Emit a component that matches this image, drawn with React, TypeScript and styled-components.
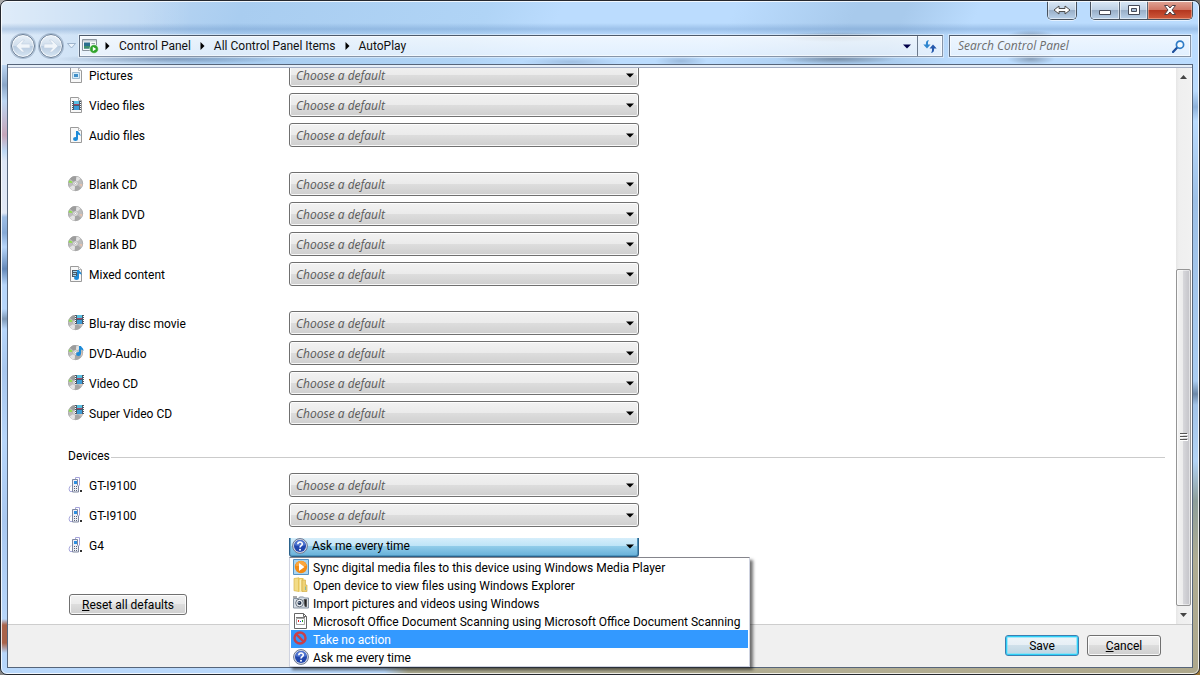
import React from "react";
import styled, { createGlobalStyle, css } from "styled-components";

const Global = createGlobalStyle`
  *, *::before, *::after { box-sizing: border-box; }
  body {
    margin: 0;
    background: linear-gradient(135deg, #a9a9a9 0%, #6f6f6f 60%, #9a7434 100%);
    font: 12px/16px Roboto, "Open Sans", sans-serif;
    color: #000;
  }
  button, input, select { font: inherit; color: inherit; margin: 0; }
  svg { display: block; flex: none; }
`;

/* ---------- window frame ---------- */

const Frame = styled.div`
  position: relative;
  display: flex;
  flex-direction: column;
  height: 100vh;
  padding: 0 6px 6px;
  overflow: hidden;
  border: 1px solid #25282f;
  border-radius: 7px;
  background:
    radial-gradient(ellipse 60px 5px at 835px 36px, rgba(90, 105, 125, 0.55), transparent),
    radial-gradient(ellipse 60px 5px at 835px 58px, rgba(90, 105, 125, 0.6), transparent),
    radial-gradient(ellipse 24px 6px at 1030px 35px, rgba(90, 105, 125, 0.5), transparent),
    radial-gradient(ellipse 24px 6px at 1030px 58px, rgba(90, 105, 125, 0.5), transparent),
    radial-gradient(ellipse 120px 5px at 170px 58px, rgba(80, 105, 140, 0.5), transparent),
    radial-gradient(ellipse 50px 5px at 570px 61px, rgba(80, 105, 140, 0.25), transparent),
    radial-gradient(ellipse 26px 6px at 680px 60px, rgba(80, 105, 140, 0.3), transparent),
    linear-gradient(transparent 22px, rgba(90, 135, 190, 0.32) 28px, transparent 34px),
    linear-gradient(to right, rgba(255, 255, 255, 0.55), transparent 190px) top / 100% 64px no-repeat,
    linear-gradient(115deg, #b9d5f2 0, #b9d5f2 12%, #a9cdf0 20%, #b0d4f6 40%, #bbdcfe 46%, #bbdcfe 60%, #a8caec 70%, #a8caec 74%, #bbdcfe 80%, #bbdcfe 100%) top / 100% 64px no-repeat,
    linear-gradient(to right, #b9d8fb 0, #b9d8fb 32%, #aba98f 34%, #b3ae93 70%, #aea88c 100%) bottom / 100% 7px no-repeat,
    linear-gradient(#bdd7f3 64px, #8aa6c8 84px, #bdd7f3 100px, #c6a6ba 134px, #bdd7f3 150px, #dde6f5 160px, #e1e8f5 212px, #9dbde4 216px, #86a9d6 232px, #b7d6fa 246px, #6488b8 268px, #b7d6fa 284px, #b7d6fa 308px, #7e98b6 318px, #b7d6fa 328px, #a8c7ee 370px, #b7d6fa 440px, #a9c8f0 520px, #b7d6fa 618px, #a9634a 624px, #a9634a 642px, #b7d6fa 652px) left / 50% 100% no-repeat,
    linear-gradient(#bbdcfe 90px, #8db1da 106px, #bbdcfe 120px, #9dc0e6 200px, #aacdf2 380px, #6c88a8 393px, #a3c4e8 404px, #b3d4f6 460px, #8e9f9a 500px, #b0ad93 560px, #aea88c 100%) right / 50% 100% no-repeat;
  &::after {
    content: "";
    position: absolute;
    inset: 0;
    border: 1px solid rgba(255, 255, 255, 0.8);
    border-radius: 6px;
    pointer-events: none;
  }
`;

const CaptionBar = styled.header`
  display: flex;
  flex: none;
  justify-content: flex-end;
  height: 19px;
`;

const CaptionGroup = styled.div`
  display: flex;
  overflow: hidden;
  margin-left: 13px;
  border: 1px solid #47525f;
  border-top: 0;
  border-radius: 0 0 5px 5px;
  box-shadow: 0 1px 0 rgba(255, 255, 255, 0.6);
`;

const CaptionButton = styled.button<{ $wide?: boolean; $danger?: boolean }>`
  display: grid;
  place-items: center;
  width: ${(p) => (p.$wide ? 45 : 28)}px;
  padding: 0;
  border: 0;
  background: linear-gradient(#dbe9f7, #bccfe3 50%, #98aec7 51%, #b9d1ea);
  box-shadow: inset 0 0 0 1px rgba(255, 255, 255, 0.5);
  & + & { border-left: 1px solid #5b6878; }
  ${(p) =>
    p.$danger &&
    css`
      background: linear-gradient(#e0a597, #cf7563 50%, #b3361f 51%, #cf5a3c);
      box-shadow: inset 0 0 0 1px rgba(255, 220, 200, 0.45);
    `}
`;

const Toolbar = styled.nav`
  display: flex;
  flex: none;
  align-items: center;
  height: 22px;
  margin: 15px 2px 7px 4px;
`;

const History = styled.div`
  display: flex;
  align-items: center;
  flex: none;
  width: 68px;
`;

const RoundButton = styled.button`
  display: grid;
  place-items: center;
  width: 24px;
  height: 24px;
  margin-right: 4px;
  padding: 0;
  border: 1px solid #6c7f96;
  border-radius: 50%;
  background: linear-gradient(#e9f1f9, #d0deec 48%, #b9cce0 52%, #d6e5f3);
  box-shadow: inset 0 0 0 1px rgba(255, 255, 255, 0.7), 0 0 0 1px rgba(110, 135, 165, 0.45);
`;

const RecentButton = styled.button`
  padding: 0;
  border: 0;
  background: none;
`;

const glassField = css`
  display: flex;
  align-items: center;
  height: 22px;
  border: 1px solid #8795a8;
  border-top-color: #4d5a6b;
  border-left-color: #5f6d80;
  background: linear-gradient(rgba(255, 255, 255, 0.75), rgba(244, 249, 255, 0.68));
  box-shadow: 0 0 0 1px rgba(255, 255, 255, 0.4), inset 0 0 0 1px rgba(255, 255, 255, 0.6);
`;

const AddressBar = styled.div`
  ${glassField}
  flex: 1;
  min-width: 0;
  padding-left: 2px;
`;

const Crumbs = styled.ol`
  display: flex;
  flex: 1;
  align-items: center;
  margin: 0;
  padding: 0 0 0 6px;
  list-style: none;
`;

const Crumb = styled.li`
  display: flex;
  align-items: center;
  gap: 9px;
  margin-right: 9px;
  a { color: #111; text-decoration: none; }
`;

const FieldButton = styled.button<{ $divided?: boolean }>`
  display: grid;
  place-items: center;
  align-self: stretch;
  width: ${(p) => (p.$divided ? 25 : 20)}px;
  padding: 0;
  border: 0;
  border-left: ${(p) => (p.$divided ? "1px solid #6c7a8c" : "0")};
  background: none;
`;

const SearchBox = styled.form`
  ${glassField}
  flex: 0 0 242px;
  margin-left: 6px;
  padding: 0 2px 0 8px;
  input {
    flex: 1;
    min-width: 0;
    padding: 0;
    border: 0;
    outline: 0;
    background: none;
    font-family: "Open Sans", sans-serif;
    font-style: italic;
  }
  input::placeholder { color: #6d6d6d; opacity: 1; }
`;

/* ---------- page ---------- */

const Client = styled.main`
  display: flex;
  flex: 1;
  flex-direction: column;
  min-height: 0;
  border: 1px solid #56657a;
  background: #fff;
`;

const TopEdge = styled.div`
  flex: none;
  height: 3px;
  border-bottom: 1px solid #a3adc2;
  background: #e6eff9;
`;

/* The page rests at its last scroll position, so older rows run off the top;
   the open list may still hang over the bar below. */
const Viewport = styled.div`
  position: relative;
  z-index: 1;
  display: flex;
  flex: 1;
  min-height: 0;
  padding-right: 1px;
  clip-path: inset(0 0 -60px 0);
`;

const Page = styled.div`
  display: flex;
  flex: 1;
  flex-direction: column;
  justify-content: flex-end;
  min-width: 0;
  padding: 0 11px 9px 60px;
`;

const Group = styled.section`
  display: flex;
  flex: none;
  flex-direction: column;
  gap: 6px;
  & + & { margin-top: 25px; }
`;

const Row = styled.div`
  display: flex;
  align-items: center;
  height: 24px;
`;

const ItemText = styled.span`
  padding-top: 2px;
  line-height: 16px;
  white-space: nowrap;
`;

const RowLabel = styled.label`
  display: flex;
  flex: 0 0 221px;
  align-items: center;
  gap: 5px;
`;

const SelectShell = styled.div`
  display: flex;
  align-items: center;
  flex: 0 1 350px;
  height: 24px;
  border: 1px solid #707070;
  border-radius: 3px;
  background: linear-gradient(#f2f2f2, #ebebeb 48%, #dddddd 50%, #cfcfcf);
  box-shadow: inset 0 0 0 1px rgba(255, 255, 255, 0.85);
  select {
    flex: 1;
    height: 22px;
    padding: 2px 6px 0;
    border: 0;
    outline: 0;
    appearance: none;
    background: none;
    font-family: "Open Sans", sans-serif;
    font-style: italic;
    color: #5a5a5a;
  }
  svg { margin: 0 4px 0 -12px; pointer-events: none; }
`;

const GroupTitle = styled.h2`
  display: flex;
  flex: none;
  align-items: center;
  gap: 1px;
  height: 20px;
  margin: 20px 0 8px;
  font-size: 12px;
  font-weight: 400;
  &::after {
    content: "";
    flex: 1;
    height: 1px;
    margin-top: 4px;
    background: #cbcbcb;
  }
`;

const OpenCombo = styled.div`
  position: relative;
  display: flex;
  flex: 0 1 350px;
  align-self: flex-end;
`;

const ComboButton = styled.button`
  display: flex;
  flex: 1;
  align-items: center;
  gap: 4px;
  height: 19px;
  padding: 0 4px 2px 2px;
  border: 1px solid #2c628b;
  border-top: 0;
  border-radius: 0 0 3px 3px;
  background: linear-gradient(#d6eefb, #bfe4f7 42%, #93cdea 44%, #66b0d9);
  box-shadow: inset 1px 0 0 #6aa5c9, inset -1px 0 0 #4d90b8, inset 0 -1px 0 #4f97c0;
  text-align: left;
  span { flex: 1; }
`;

const Menu = styled.ul`
  position: absolute;
  top: 100%;
  left: 0;
  width: max-content;
  min-width: 461px;
  margin: 0;
  padding: 0 1px;
  border: 1px solid #cfd3e0;
  border-top-color: #85858c;
  background: #fff;
  box-shadow: 3px 3px 3px rgba(0, 0, 0, 0.55);
  list-style: none;
`;

const MenuItem = styled.li<{ $active?: boolean }>`
  display: flex;
  align-items: center;
  gap: 4px;
  height: 18px;
  padding: 0 6px 0 2px;
  background: ${(p) => (p.$active ? "#3399ff" : "transparent")};
  color: ${(p) => (p.$active ? "#fff" : "#000")};
`;

const Actions = styled.div`
  display: flex;
  flex: none;
  padding: 37px 1px 0;
`;

const PushButton = styled.button<{ $primary?: boolean }>`
  min-width: 74px;
  height: 21px;
  padding: 0 12px;
  border: 1px solid #707070;
  border-radius: 3px;
  background: linear-gradient(#f2f2f2, #ebebeb 48%, #dddddd 50%, #cfcfcf);
  box-shadow: inset 0 0 0 1px rgba(255, 255, 255, 0.85);
  line-height: 18px;
  white-space: nowrap;
  ${(p) =>
    p.$primary &&
    css`
      border-color: #3c7fb1;
      background: linear-gradient(#eef5f9, #e6eff5 48%, #cfe0ea 50%, #bcd5e3);
      box-shadow: inset 0 0 0 1px #2fd0f8, inset 0 0 0 2px rgba(120, 225, 250, 0.6);
    `}
`;

const Footer = styled.footer`
  display: flex;
  flex: none;
  justify-content: flex-end;
  gap: 8px;
  padding: 10px 31px 11px;
  border-top: 1px solid #cdcdcd;
  background: #f0f0f0;
`;

/* ---------- scroll bar ---------- */

const ScrollBar = styled.div`
  display: flex;
  flex: 0 0 15px;
  flex-direction: column;
  background: linear-gradient(to right, #e6e6e6, #efefef 3px, #f1f1f1);
`;

const ScrollArrow = styled.button`
  display: grid;
  place-items: center;
  height: 18px;
  padding: 0;
  border: 0;
  background: none;
`;

const ScrollSpace = styled.div`
  flex: 23;
`;

const ScrollThumb = styled.div`
  display: grid;
  flex: 42;
  place-items: center;
  border: 1px solid #959595;
  border-radius: 2px;
  background: linear-gradient(to right, #f4f4f4, #ececec 45%, #d6d6da 50%, #c3c3c8);
  box-shadow: inset 0 0 0 1px rgba(255, 255, 255, 0.5);
`;

/* ---------- drawings ---------- */

const Down = ({ color = "#000" }: { color?: string }) => (
  <svg width="8" height="5" viewBox="0 0 8 5" aria-hidden="true">
    <path d="M0 .5h8L4 4.5z" fill={color} />
  </svg>
);

const Right = () => (
  <svg width="5" height="8" viewBox="0 0 5 8" aria-hidden="true">
    <path d="M.5 0v8L4.5 4z" fill="#000" />
  </svg>
);

const Sheet = () => (
  <>
    <path d="M2.500.5h8l3 3v12h-11z" fill="#f8f8f8" stroke="#9a9a9a" />
    <path d="M10.500.5v3h3" fill="#fff" stroke="#b5b5b5" />
  </>
);

const Film = ({ x, y }: { x: number; y: number }) => (
  <g transform={`translate(${x} ${y})`}>
    <path d="M0 0h9v9H0z" fill="#4b5866" />
    <path d="M2 0h5v4H2z" fill="#58bfe2" />
    <path d="M2 5h5v4H2z" fill="#3a9bd6" />
    <path d="M2 3h5v1H2z" fill="#a6466a" />
    <path d="M0 1.500h1M0 3.500h1M0 5.500h1M0 7.500h1M8 1.500h1M8 3.500h1M8 5.500h1M8 7.500h1" stroke="#fff" />
  </g>
);

const Note = ({ x, y }: { x: number; y: number }) => (
  <g transform={`translate(${x} ${y})`} fill="#1b8ad8">
    <ellipse cx="2.500" cy="8" rx="2.500" ry="2" />
    <path d="M3 0h2c.3 1.800 2.800 2 2.500 5.200C7 4.200 6 3.700 5 3.500V8H3z" />
  </g>
);

const Disc = () => (
  <>
    <circle cx="7.500" cy="7.500" r="7.200" fill="#bdbdbd" stroke="#9a9a9a" strokeWidth=".7" />
    <path d="M7.500 7.500L2 2.700A7.200 7.200 0 0 1 8.500.4z" fill="#9c9c9c" />
    <path d="M7.500 7.500L8.500.4a7 7 0 0 1 4 2.100z" fill="#e2e2e2" />
    <path d="M7.500 7.500L13 12a7 7 0 0 1-6.500 2.600z" fill="#a6a6a6" />
    <path d="M7.500 7.500L6.500 14.600A7 7 0 0 1 1.500 11.500z" fill="#e4e4e4" />
    <path d="M4 6.900L.7 6.500a7 7 0 0 1 .8-2.300l3 1.500z" fill="#8ee04a" />
    <path d="M11 8l3.400.2a7 7 0 0 1-.7 2.500z" fill="#e7c3b0" />
    <circle cx="7.500" cy="7.500" r="2.600" fill="#e8e8e8" stroke="#a5a5a5" strokeWidth=".6" />
    <circle cx="7.500" cy="7.500" r="1" fill="#fff" stroke="#999" strokeWidth=".5" />
  </>
);

type Kind = "picture" | "video" | "audio" | "disc" | "mixed" | "discVideo" | "discAudio" | "phone";

const drawings: Record<Kind, React.ReactNode> = {
  picture: (
    <>
      <Sheet />
      <path d="M4.500 5.500h7v6h-7z" fill="#d4ecfa" stroke="#9bb9cf" />
      <path d="M6 7h4v3H6z" fill="#3f8fc9" />
    </>
  ),
  video: (<><Sheet /><Film x={4} y={4} /></>),
  audio: (<><Sheet /><Note x={5} y={4} /></>),
  mixed: (
    <>
      <Sheet />
      <path d="M4 4h6v7H4z" fill="#4b5866" />
      <path d="M5 5.500h4M5 7.500h3M5 9.500h3" stroke="#9fd3ec" />
      <Note x={6} y={4} />
    </>
  ),
  disc: <Disc />,
  discVideo: (<><Disc /><Film x={7} y={0} /></>),
  discAudio: (<><Disc /><Note x={8} y={1} /></>),
  phone: (
    <>
      <path d="M7.500 2V.5h4v8M3 8.500c-2 1.500-2.500 4-1 6h3" fill="none" stroke="#a6a6dc" />
      <path d="M4.500 2.500h5v5.500l1 1v6h-6z" fill="#eceff6" stroke="#7f879f" />
      <path d="M6 4h3v3H6z" fill="#2d8fe0" />
      <path d="M6 9.500h3M6 11.500h3M6 13.500h3" stroke="#5d6377" strokeDasharray="1 1" />
      <path d="M12 13h2v2h-2z" fill="#333" />
    </>
  ),
};

const ItemIcon = ({ kind }: { kind: Kind }) => (
  <svg width="16" height="16" viewBox="0 0 16 16" aria-hidden="true">{drawings[kind]}</svg>
);

const AskIcon = () => (
  <svg width="16" height="16" viewBox="0 0 16 16" aria-hidden="true">
    <circle cx="8" cy="8" r="7.400" fill="#d5dbe8" stroke="#6b7690" />
    <circle cx="8" cy="8" r="6" fill="#2146ad" />
    <path d="M2.500 7a5.500 5 0 0 1 11 0c-3 1.200-8 1.200-11 0z" fill="#4f74d0" />
    <path d="M5.800 6.300C5.800 3.300 10.400 3.400 10.300 6 10.200 7.700 8 7.700 8 9.600" fill="none" stroke="#fff" strokeWidth="1.600" />
    <circle cx="8" cy="11.700" r="1" fill="#fff" />
  </svg>
);

const PlayerIcon = () => (
  <svg width="16" height="16" viewBox="0 0 16 16" aria-hidden="true">
    <path d="M.5.5h15v15H.5z" fill="#a9d5f2" stroke="#5592c4" />
    <circle cx="8" cy="8" r="6.200" fill="#f38a14" />
    <path d="M2.500 7a5.500 5 0 0 1 11 0z" fill="#fba63e" />
    <path d="M6 4v8l5.500-4z" fill="#fff" />
  </svg>
);

const FolderIcon = () => (
  <svg width="16" height="16" viewBox="0 0 16 16" aria-hidden="true">
    <path d="M1 1.500L6 .8v13.700l-5-.8z" fill="#f3dc86" stroke="#d9b64e" strokeWidth=".7" />
    <path d="M5 1h5.500v13.500H5z" fill="#e7c65c" />
    <path d="M6.500 2.500L8.500 2v13l-2-.6z" fill="#fbf0b8" />
    <path d="M9 3h3.500v5H14v6.500H9z" fill="#efd375" stroke="#d4b04a" strokeWidth=".7" />
    <path d="M12 9.500h1V13h-1z" fill="#8bb7a0" />
  </svg>
);

const CameraIcon = () => (
  <svg width="16" height="16" viewBox="0 0 16 16" aria-hidden="true">
    <path d="M.5 3.500h5l1-1.500h4l1 1h4v10H.5z" fill="#d7dee6" stroke="#8693a1" />
    <path d="M0 2h4M11 4.500h2.500v7H12z" fill="#222" stroke="#555" />
    <circle cx="6.500" cy="8" r="3.800" fill="#f1f4f7" stroke="#69737f" />
    <circle cx="6.500" cy="8" r="2" fill="#26344a" />
    <circle cx="6" cy="7.500" r=".7" fill="#b9cde4" />
  </svg>
);

const ScanIcon = () => (
  <svg width="16" height="16" viewBox="0 0 16 16" aria-hidden="true">
    <path d="M1.500.5h9l3 3v12h-12z" fill="#fff" stroke="#666" />
    <path d="M10.500.5v3h3" fill="none" stroke="#666" />
    <path d="M3 4h9v1H3z" fill="#777" />
    <path d="M3.500 5.500h8v6h-8z" fill="#fff" stroke="#a5a5a5" />
    <path d="M5 7h1v2H5z" fill="#e02020" />
    <path d="M7 8h1v1H7z" fill="#2038e0" />
    <path d="M9 7h1v2H9z" fill="#20a020" />
  </svg>
);

const NoIcon = () => (
  <svg width="16" height="16" viewBox="0 0 16 16" aria-hidden="true">
    <circle cx="7" cy="7" r="5.500" fill="none" stroke="#c8404a" strokeWidth="2.400" />
    <path d="M3.200 3.200l7.600 7.600" stroke="#c8404a" strokeWidth="2.400" />
  </svg>
);

/* ---------- data ---------- */

type Item = { id: string; label: string; kind: Kind };

const groups: Item[][] = [
  [
    { id: "pictures", label: "Pictures", kind: "picture" },
    { id: "video", label: "Video files", kind: "video" },
    { id: "audio", label: "Audio files", kind: "audio" },
  ],
  [
    { id: "cd", label: "Blank CD", kind: "disc" },
    { id: "dvd", label: "Blank DVD", kind: "disc" },
    { id: "bd", label: "Blank BD", kind: "disc" },
    { id: "mixed", label: "Mixed content", kind: "mixed" },
  ],
  [
    { id: "bluray", label: "Blu-ray disc movie", kind: "discVideo" },
    { id: "dvdaudio", label: "DVD-Audio", kind: "discAudio" },
    { id: "vcd", label: "Video CD", kind: "discVideo" },
    { id: "svcd", label: "Super Video CD", kind: "discVideo" },
  ],
];

const devices: Item[] = [
  { id: "gt1", label: "GT-I9100", kind: "phone" },
  { id: "gt2", label: "GT-I9100", kind: "phone" },
];

const options = [
  { label: "Sync digital media files to this device using Windows Media Player", icon: <PlayerIcon /> },
  { label: "Open device to view files using Windows Explorer", icon: <FolderIcon /> },
  { label: "Import pictures and videos using Windows", icon: <CameraIcon /> },
  { label: "Microsoft Office Document Scanning using Microsoft Office Document Scanning", icon: <ScanIcon /> },
  { label: "Take no action", icon: <NoIcon />, active: true },
  { label: "Ask me every time", icon: <AskIcon /> },
];

const ChoiceRow = ({ item }: { item: Item }) => (
  <Row>
    <RowLabel htmlFor={item.id}>
      <ItemIcon kind={item.kind} />
      <ItemText>{item.label}</ItemText>
    </RowLabel>
    <SelectShell>
      <select id={item.id}>
        <option>Choose a default</option>
      </select>
      <Down />
    </SelectShell>
  </Row>
);

export default function App() {
  return (
    <>
      <Global />
      <Frame>
        <CaptionBar>
          <CaptionGroup>
            <CaptionButton type="button" aria-label="Resize">
              <svg width="18" height="10" viewBox="0 0 18 10">
                <path d="M1 5l5-4v2.500h6V1l5 4-5 4V6.500H6V9z" fill="#fff" stroke="#4c4c4c" />
              </svg>
            </CaptionButton>
          </CaptionGroup>
          <CaptionGroup>
            <CaptionButton type="button" aria-label="Minimize">
              <svg width="12" height="12" viewBox="0 0 12 12">
                <path d="M.5 6.500h11v4H.5z" fill="#fff" stroke="#454a58" />
              </svg>
            </CaptionButton>
            <CaptionButton type="button" aria-label="Maximize">
              <svg width="12" height="10" viewBox="0 0 12 10">
                <path d="M.5.5h11v9H.5z" fill="#fff" stroke="#454a58" />
                <path d="M3.500 3.500h5v3h-5z" fill="#a9bfd8" stroke="#454a58" />
              </svg>
            </CaptionButton>
            <CaptionButton type="button" aria-label="Close" $wide $danger>
              <svg width="12" height="10" viewBox="0 0 12 10">
                <path d="M.5.5h3.300L6 3 8.200.5h3.300L8 5l3.500 4.500H8.200L6 7 3.800 9.500H.5L4 5z" fill="#fff" stroke="#4d4046" />
              </svg>
            </CaptionButton>
          </CaptionGroup>
        </CaptionBar>

        <Toolbar aria-label="Navigation">
          <History>
            <RoundButton type="button" aria-label="Back">
              <svg width="16" height="14" viewBox="0 0 16 14">
                <path d="M1 7l6-6h2.500L6.500 5H15v4H6.500l3 4H7z" fill="#f0f5fa" stroke="#c3d2e2" strokeWidth=".6" />
              </svg>
            </RoundButton>
            <RoundButton type="button" aria-label="Forward">
              <svg width="16" height="14" viewBox="0 0 16 14">
                <path d="M15 7L9 1H6.500l3 4H1v4h8.500l-3 4H9z" fill="#f0f5fa" stroke="#c3d2e2" strokeWidth=".6" />
              </svg>
            </RoundButton>
            <RecentButton type="button" aria-label="Recent pages">
              <svg width="9" height="6" viewBox="0 0 9 6">
                <path d="M.5.5h8l-4 4.500z" fill="#eaf3fc" stroke="#8ea6c2" strokeWidth=".8" />
              </svg>
            </RecentButton>
          </History>
          <AddressBar>
            <svg width="17" height="16" viewBox="0 0 17 16" aria-hidden="true">
              <path d="M.5 1.500h14v11H.5z" fill="#f7f9fb" stroke="#8a949e" />
              <path d="M1 2h13v1.500H1z" fill="#c4ccd4" />
              <path d="M2 4.500h6v6H2z" fill="#2b6f8f" />
              <path d="M2 8h6v2.500H2z" fill="#3d8f6c" />
              <path d="M9.500 5.500h3.500" stroke="#9aa5af" />
              <circle cx="12" cy="11" r="4.300" fill="#2fa32b" stroke="#e8f5e8" strokeWidth=".6" />
              <path d="M10.800 8.700v4.600l3.400-2.300z" fill="#fff" />
            </svg>
            <Crumbs>
              <Crumb><Right /><a href="#control-panel">Control Panel</a></Crumb>
              <Crumb><Right /><a href="#all-items">All Control Panel Items</a></Crumb>
              <Crumb><Right /><a href="#autoplay">AutoPlay</a></Crumb>
            </Crumbs>
            <FieldButton type="button" aria-label="Previous locations"><Down color="#00004a" /></FieldButton>
            <FieldButton type="button" aria-label="Refresh" $divided>
              <svg width="14" height="13" viewBox="0 0 14 13">
                <path d="M6 0C3.500.3 2.800 1.800 2.900 4.500H.3L4 8.500l3.500-4H5C4.900 2.500 5 1.200 6 0z" fill="#2f86cf" />
                <path d="M8 13c2.500-.3 3.200-1.800 3.100-4.500h2.600L10 4.500l-3.500 4H9C9.100 10.500 9 11.800 8 13z" fill="#2559ad" />
              </svg>
            </FieldButton>
          </AddressBar>
          <SearchBox role="search">
            <input type="search" aria-label="Search Control Panel" placeholder="Search Control Panel" />
            <FieldButton type="button" aria-label="Search">
              <svg width="13" height="13" viewBox="0 0 13 13">
                <path d="M1 12l4.200-4.600" stroke="#1f4f9c" strokeWidth="2.200" strokeLinecap="round" />
                <circle cx="8" cy="4.700" r="3.600" fill="#f3faff" stroke="#2f7cc6" strokeWidth="1.700" />
              </svg>
            </FieldButton>
          </SearchBox>
        </Toolbar>

        <Client>
          <TopEdge />
          <Viewport>
            <Page>
              {groups.map((items) => (
                <Group key={items[0].id}>
                  {items.map((item) => <ChoiceRow key={item.id} item={item} />)}
                </Group>
              ))}
              <GroupTitle><ItemText>Devices</ItemText></GroupTitle>
              <Group>
                {devices.map((item) => <ChoiceRow key={item.id} item={item} />)}
                <Row>
                  <RowLabel htmlFor="g4"><ItemIcon kind="phone" /><ItemText>G4</ItemText></RowLabel>
                  <OpenCombo>
                    <ComboButton id="g4" type="button" aria-haspopup="listbox" aria-expanded="true">
                      <AskIcon />
                      <span>Ask me every time</span>
                      <Down />
                    </ComboButton>
                    <Menu role="listbox">
                      {options.map((o) => (
                        <MenuItem key={o.label} role="option" aria-selected={!!o.active} $active={o.active}>
                          {o.icon}
                          <ItemText>{o.label}</ItemText>
                        </MenuItem>
                      ))}
                    </Menu>
                  </OpenCombo>
                </Row>
              </Group>
              <Actions>
                <PushButton type="button"><u>R</u>eset all defaults</PushButton>
              </Actions>
            </Page>
            <ScrollBar role="scrollbar" aria-orientation="vertical" aria-valuenow={100}>
              <ScrollArrow type="button" aria-label="Scroll up">
                <svg width="7" height="4" viewBox="0 0 7 4"><path d="M0 4h7L3.500 0z" fill="#444" /></svg>
              </ScrollArrow>
              <ScrollSpace />
              <ScrollThumb>
                <svg width="8" height="9" viewBox="0 0 8 9">
                  <path d="M0 1.500h8M0 4.500h8M0 7.500h8" stroke="#fff" />
                  <path d="M0 .5h7M0 3.500h7M0 6.500h7" stroke="#555" />
                </svg>
              </ScrollThumb>
              <ScrollArrow type="button" aria-label="Scroll down">
                <svg width="7" height="4" viewBox="0 0 7 4"><path d="M0 0h7L3.500 4z" fill="#444" /></svg>
              </ScrollArrow>
            </ScrollBar>
          </Viewport>
          <Footer>
            <PushButton type="button" $primary>Save</PushButton>
            <PushButton type="button"><u>C</u>ancel</PushButton>
          </Footer>
        </Client>
      </Frame>
    </>
  );
}
